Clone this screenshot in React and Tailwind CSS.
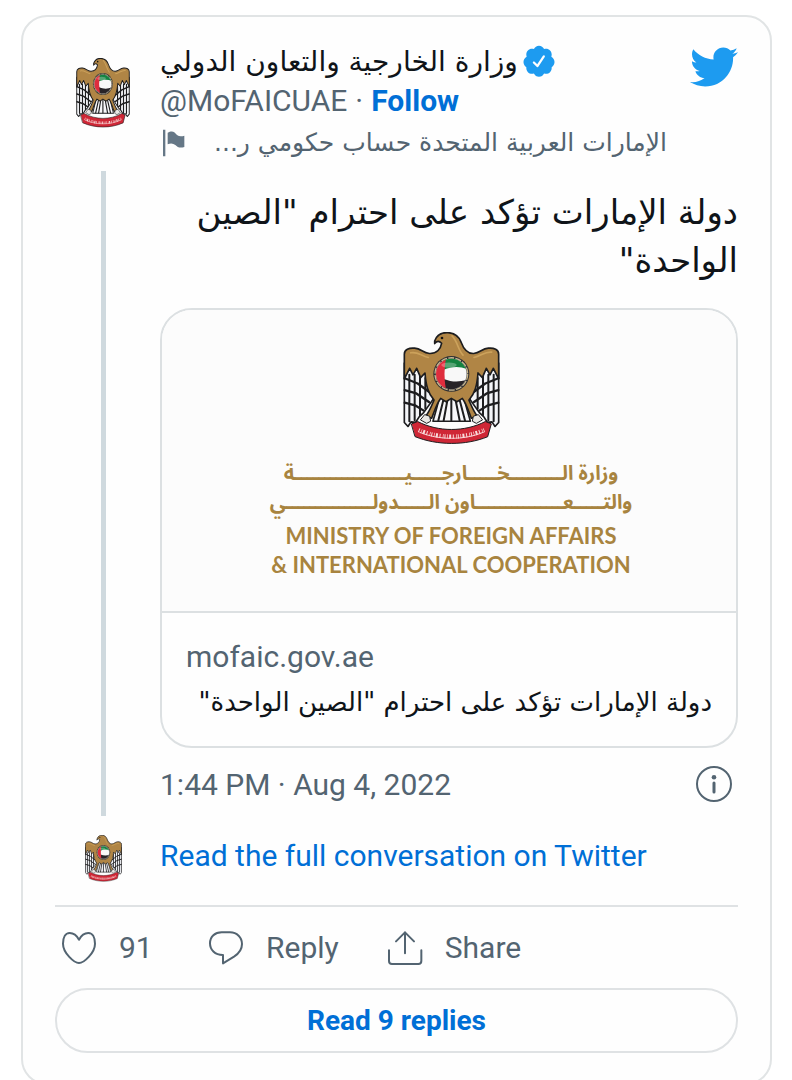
import { FaTwitter } from "react-icons/fa";

function Emblem({ className }) {
  return (
    <svg viewBox="68 36 291 342" preserveAspectRatio="none" className={className} aria-hidden="true">
      <g stroke="#1d1d1f" strokeWidth="5" strokeLinejoin="round" strokeLinecap="round">
        <path
          fill="#f4f5f8"
          d="M72 130 L72 310 L83 322 L92 308 L106 309 L117 292 L130 280 L158 240 L150 140Z M355 130 L355 310 L344 322 L335 308 L321 309 L310 292 L297 280 L269 240 L277 140Z"
        />
        <path fill="none" strokeWidth="6" d="M87 165 V306 M103 165 V303 M119 170 V288 M135 175 V268 M340 165 V306 M324 165 V303 M308 170 V288 M292 175 V268" />
        <path fill="none" strokeWidth="7" d="M73 176 L112 192 L150 220 M73 212 L108 222 L146 248 M73 250 L104 258 L130 274 M354 176 L315 192 L277 220 M354 212 L319 222 L281 248 M354 250 L323 258 L297 274" />
        <path fill="#f7f7fa" d="M178 226 C172 262 163 285 158 306 L270 306 C265 285 256 262 250 226Z" />
        <path fill="none" strokeWidth="6" d="M190 238 L174 304 M202 238 L190 304 M213 238 V304 M225 238 L238 304 M237 238 L254 304" />
        <path
          fill="#b08545"
          d="M163 63 C170 43 187 37 203 38 C226 39 236 51 242 66 C249 85 261 102 280 101 C300 99 304 87 324 85 C341 83 355 90 355 103 L355 178 L339 146 L329 166 L318 146 L306 174 L293 160 C290 199 284 221 266 242 C274 261 279 275 291 291 L273 297 C265 276 258 252 246 237 L230 247 L213 237 L197 247 L181 237 C169 252 162 276 154 297 L136 291 C148 275 153 261 161 242 C143 221 137 199 134 160 L121 174 L109 146 L98 166 L88 146 L72 178 L72 103 C72 90 86 83 103 85 C123 87 127 99 147 101 C169 102 181 88 184 70 C177 63 170 62 163 71Z"
        />
        <path fill="#e9e7e4" strokeWidth="3" d="M121 301 L133 286 L148 291 L151 306 L140 312Z M306 301 L294 286 L279 291 L276 306 L287 312Z" />
        <path fill="#cf2736" strokeWidth="3" d="M94 314 L112 307 C174 339 253 339 315 307 L333 314 L322 353 C256 380 171 380 105 353Z" />
      </g>
      <path fill="none" stroke="#f8dada" strokeWidth="13" strokeDasharray="3 5 2 4 6 5 3 7 2 3" d="M115 333 C175 359 252 359 312 333" />
      <path fill="none" stroke="#f8dada" strokeWidth="3" d="M117 339 C175 364 252 364 310 339" />
      <path fill="none" stroke="#d9ae65" strokeWidth="5" strokeLinecap="round" opacity=".7" d="M215 48 C232 64 232 89 248 106 M91 99 C111 94 122 108 144 113 M334 97 C315 94 302 109 281 113" />
      <circle cx="185" cy="54" r="4" fill="#111" />
      <circle cx="213" cy="163" r="54" fill="#303033" />
      <circle cx="213" cy="163" r="49" fill="none" stroke="#c7b68e" strokeWidth="4" strokeDasharray="18 4" />
      <clipPath id="emblem-disc"><circle cx="213" cy="163" r="46" /></clipPath>
      <g clipPath="url(#emblem-disc)">
        <path fill="#f8f8f8" d="M165 115 h100 v100 h-100Z" />
        <path fill="#158341" d="M190 115 H265 V150 C240 139 217 139 190 150Z" />
        <path fill="#272327" d="M190 178 C217 188 237 189 265 178 V215 H190Z" />
        <path fill="#df2d3d" d="M165 115 H197 Q188 163 197 211 H165Z" />
      </g>
      <ellipse cx="206" cy="136" rx="23" ry="8" fill="#fff" opacity=".28" />
    </svg>
  );
}

function VerifiedIcon() {
  return (
    <svg viewBox="1 1 22 23" className="size-8.5 shrink-0 fill-[#1d9bf0]" role="img" aria-label="Verified account">
      <path d="M22.5 12.5c0-1.58-.875-2.95-2.148-3.6.154-.435.238-.905.238-1.4 0-2.21-1.71-3.998-3.818-3.998-.47 0-.92.084-1.336.25C14.818 2.415 13.51 1.5 12 1.5s-2.816.917-3.437 2.25c-.415-.165-.866-.25-1.336-.25-2.11 0-3.818 1.79-3.818 4 0 .494.083.964.237 1.4-1.272.65-2.147 2.018-2.147 3.6 0 1.495.782 2.798 1.942 3.486-.02.17-.032.34-.032.514 0 2.21 1.708 4 3.818 4 .47 0 .92-.086 1.335-.25.62 1.334 1.926 2.25 3.437 2.25 1.512 0 2.818-.916 3.437-2.25.415.163.865.248 1.336.248 2.11 0 3.818-1.79 3.818-4 0-.174-.012-.344-.033-.513 1.158-.687 1.943-1.99 1.943-3.484zm-6.616-3.334l-4.334 6.5c-.145.217-.382.334-.625.334-.143 0-.288-.04-.416-.126l-.115-.094-2.415-2.415c-.293-.293-.293-.768 0-1.06s.768-.294 1.06 0l1.77 1.767 3.825-5.74c.23-.345.696-.436 1.04-.207.346.23.44.696.21 1.04z" />
    </svg>
  );
}

function LineIcon({ viewBox, d }) {
  return (
    <svg viewBox={viewBox} className="size-9 shrink-0" fill="none" stroke="currentColor" strokeWidth="6" strokeLinecap="round" strokeLinejoin="round" aria-hidden="true">
      <path d={d} />
    </svg>
  );
}

const kashida = (count) => "ـ".repeat(count);

const ministryLines = [
  `وزارة الـ${kashida(8)}خـ${kashida(4)}ارجـ${kashida(4)}يـ${kashida(18)}ة`,
  `والتـ${kashida(4)}عـ${kashida(14)}اون الـ${kashida(4)}دولـ${kashida(14)}ي`,
];

const actions = [
  {
    label: "91",
    name: "Like, 91 likes",
    viewBox: "184 331 108 108",
    d: "M238 360 C230 345 219 340 210 340 C197 340 190 354 190 372 C190 400 224 430 238 430 C252 430 286 400 286 372 C286 354 279 340 266 340 C257 340 246 345 238 360Z",
  },
  {
    label: "Reply",
    name: "Reply",
    viewBox: "624 331 108 108",
    d: "M669 406 C644 406 630 390 630 371 C630 351 645 338 665 338 H690 C711 338 726 353 726 373 C726 390 716 402 702 411 L669 431Z",
  },
  {
    label: "Share",
    name: "Share",
    viewBox: "48 571 108 108",
    d: "M102 641 V578 M75 605 L102 578 L129 605 M54 632 V664 Q54 673 63 673 H142 Q151 673 151 664 V632",
  },
];

export default function App() {
  return (
    <main className="min-h-screen bg-white pt-[15px] pr-5 pl-[21px] font-[Roboto,'DejaVu_Sans',sans-serif] text-[30px] text-[#536471]">
      <article className="rounded-[26px] border-2 border-[#e1e4e5] bg-[#fefefe] px-8 pt-[26px] pb-[30px]">
        <div className="flex gap-[9px]">
          <div className="flex w-24 shrink-0 flex-col items-center pt-[15px]">
            <Emblem className="h-[70px] w-[54px]" />
            <div className="mt-[43px] w-[5px] flex-1 bg-[#cfd9de]" />
          </div>
          <div className="min-w-0 flex-1">
            <header className="flex items-start justify-between">
              <div className="min-w-0">
                <div className="flex h-[38px] items-center gap-1">
                  <a href="#profile" dir="rtl" className="font-['DejaVu_Sans',sans-serif] text-[28px] leading-[38px] font-medium whitespace-nowrap text-[#0f1419]">وزارة الخارجية والتعاون الدولي</a>
                  <VerifiedIcon />
                </div>
                <div className="flex h-[40px] items-center gap-2 leading-[40px]">
                  <a href="#profile">@MoFAICUAE</a>
                  <span>·</span>
                  <a href="#follow" className="font-bold text-[#006fd6]">Follow</a>
                </div>
                <div className="flex h-11 items-center gap-7 pl-0.5">
                  <svg viewBox="489 383 70 84" className="h-7 w-6 shrink-0 fill-[#657786]" aria-hidden="true">
                    <path d="M491 385h7v80h-7z M505 394 C520 386 526 393 533 401 Q542 408 555 403 V437 C542 441 535 438 528 431 Q518 423 505 429Z" />
                  </svg>
                  <span dir="rtl" className="font-['DejaVu_Sans',sans-serif] text-[25px] leading-[44px] whitespace-nowrap">الإمارات العربية المتحدة حساب حكومي ر...</span>
                </div>
              </div>
              <a href="#twitter" aria-label="View on Twitter" className="text-[#1d9bf0]">
                <FaTwitter className="size-12" />
              </a>
            </header>

            <p dir="rtl" lang="ar" className="mt-[23px] font-['DejaVu_Sans',sans-serif] text-[34px] leading-[48px] text-[#0f1419]">دولة الإمارات تؤكد على احترام "الصين الواحدة"</p>

            <a href="#article" className="mt-6 block overflow-hidden rounded-[32px] border-2 border-[#dce0e2]">
              <div className="flex h-[303px] flex-col items-center border-b-2 border-[#dce0e2] bg-[#fcfcfc] pt-[22px] pl-1 text-[#a8843f]">
                <Emblem className="h-[113px] w-[97px]" />
                <div dir="rtl" lang="ar" className="mt-[14px] text-center font-[Roboto,'Noto_Sans_Arabic','DejaVu_Sans',sans-serif] text-[20px] leading-[29px] font-bold whitespace-nowrap">
                  {ministryLines.map((line) => <p key={line}>{line}</p>)}
                </div>
                <div className="mt-1 text-center font-[Lato,sans-serif] text-[22px] leading-[29px] font-bold whitespace-nowrap">
                  <p>MINISTRY OF FOREIGN AFFAIRS</p>
                  <p>&amp; INTERNATIONAL COOPERATION</p>
                </div>
              </div>
              <div className="px-6 pt-[22px] pb-[21px]">
                <p className="leading-[44px]">mofaic.gov.ae</p>
                <p dir="rtl" lang="ar" className="font-['DejaVu_Sans',sans-serif] text-[26px] leading-[46px] text-[#0f1419]">دولة الإمارات تؤكد على احترام "الصين الواحدة"</p>
              </div>
            </a>

            <div className="flex h-[68px] items-center justify-between pt-1">
              <a href="#status"><time dateTime="2022-08-04T13:44">1:44 PM · Aug 4, 2022</time></a>
              <button type="button" aria-label="Twitter Ads info and privacy" className="mr-[5px]">
                <svg viewBox="0 0 38 38" className="size-[38px]" fill="none" stroke="currentColor" strokeWidth="2" aria-hidden="true">
                  <circle cx="19" cy="19" r="17" />
                  <path strokeWidth="3" strokeLinecap="round" d="M19 18V27" />
                  <circle cx="19" cy="12.3" r="2.3" fill="currentColor" stroke="none" />
                </svg>
              </button>
            </div>
          </div>
        </div>

        <div className="flex h-[91px] gap-[9px] border-b-2 border-[#dfe2e4]">
          <div className="flex w-24 shrink-0 justify-center pt-[19px]">
            <Emblem className="h-[47px] w-[37px]" />
          </div>
          <a href="#conversation" className="h-20 leading-[80px] whitespace-nowrap text-[#006fd6]">Read the full conversation on Twitter</a>
        </div>

        <div className="flex h-[81px] items-center gap-12 pl-1.5">
          {actions.map((action) => (
            <button key={action.label} type="button" aria-label={action.name} className="flex items-center gap-[22px]">
              <LineIcon viewBox={action.viewBox} d={action.d} />
              <span className="min-w-[41px] text-left">{action.label}</span>
            </button>
          ))}
        </div>

        <a href="#replies" className="flex h-[65px] items-center justify-center rounded-full border-2 border-[#dfe2e4] text-[28px] font-bold text-[#006fd6]">Read 9 replies</a>
      </article>
    </main>
  );
}
